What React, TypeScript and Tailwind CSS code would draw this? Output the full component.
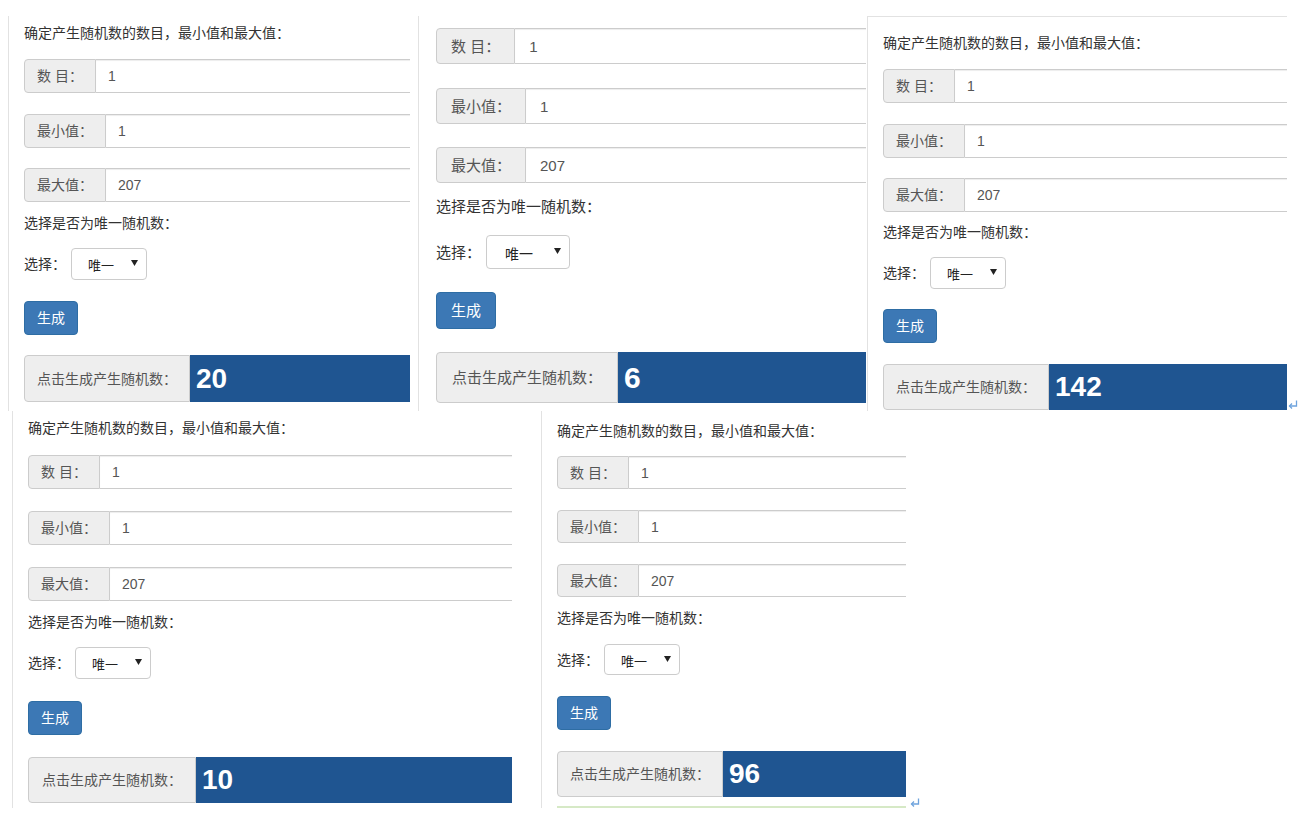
import React from "react"

type PanelCfg = {
  title: boolean
  big?: boolean
  pt: string
  titleGap: string
  groupH: string
  gap1: string
  gap2: string
  textMt: string
  selectMt: string
  selectH: string
  btnMt: string
  btnH: string
  resMt: string
  resH: string
  resPx: string
  clipW: string
  value: string
  footer?: boolean
}

const panels: Record<string, PanelCfg> = {
  one: {
    title: true, pt: "pt-[24px]", titleGap: "mt-[17px]", groupH: "h-[34px]", gap1: "mt-[21px]", gap2: "mt-[20px]",
    textMt: "mt-[12px]", selectMt: "mt-[16px]", selectH: "h-[32px]", btnMt: "mt-[21px]", btnH: "h-[34px]",
    resMt: "mt-[20px]", resH: "h-[47px]", resPx: "px-[12px]", clipW: "w-[386px]", value: "20",
  },
  two: {
    title: false, big: true, pt: "pt-[28px]", titleGap: "", groupH: "h-[36px]", gap1: "mt-[24px]", gap2: "mt-[23px]",
    textMt: "mt-[14px]", selectMt: "mt-[18px]", selectH: "h-[34px]", btnMt: "mt-[23px]", btnH: "h-[37px]",
    resMt: "mt-[23px]", resH: "h-[51px]", resPx: "px-[15px]", clipW: "w-[430px]", value: "6",
  },
  three: {
    title: true, pt: "pt-[17px]", titleGap: "mt-[17px]", groupH: "h-[34px]", gap1: "mt-[21px]", gap2: "mt-[20px]",
    textMt: "mt-[11px]", selectMt: "mt-[16px]", selectH: "h-[32px]", btnMt: "mt-[20px]", btnH: "h-[34px]",
    resMt: "mt-[21px]", resH: "h-[46px]", resPx: "px-[12px]", clipW: "w-[404px]", value: "142",
  },
  four: {
    title: true, pt: "pt-[8px]", titleGap: "mt-[18px]", groupH: "h-[34px]", gap1: "mt-[22px]", gap2: "mt-[22px]",
    textMt: "mt-[12px]", selectMt: "mt-[16px]", selectH: "h-[32px]", btnMt: "mt-[22px]", btnH: "h-[34px]",
    resMt: "mt-[22px]", resH: "h-[46px]", resPx: "px-[13px]", clipW: "w-[484px]", value: "10",
  },
  five: {
    title: true, pt: "pt-[11px]", titleGap: "mt-[16px]", groupH: "h-[33px]", gap1: "mt-[21px]", gap2: "mt-[21px]",
    textMt: "mt-[12px]", selectMt: "mt-[17px]", selectH: "h-[31px]", btnMt: "mt-[21px]", btnH: "h-[34px]",
    resMt: "mt-[21px]", resH: "h-[46px]", resPx: "px-[12px]", clipW: "w-[349px]", value: "96", footer: true,
  },
}

const Field = ({ label, value, big, className }: { label: string; value: string; big?: boolean; className: string }) => (
  <div className={`flex ${className}`}>
    <span
      className={`flex flex-none items-center rounded-l-[4px] border border-[#ccc] bg-[#eee] text-[#555] ${
        big ? "px-[14px]" : "px-[12px]"
      }`}
    >
      {label}
    </span>
    <span
      className={`flex flex-1 items-center border border-l-0 border-[#ccc] bg-white text-[#555] shadow-[inset_0_1px_1px_rgba(0,0,0,0.075)] ${
        big ? "pl-[14px]" : "pl-[12px]"
      }`}
    >
      {value}
    </span>
  </div>
)

const ReturnMark = ({ className }: { className: string }) => (
  <svg className={className} width="10" height="9" viewBox="0 0 10 9" fill="none" stroke="#6ea3dd" strokeWidth="1.3">
    <path d="M8.5 0.5 V6 H1.5" />
    <path d="M4 3.5 L1.5 6 L4 8.5" />
  </svg>
)

const Panel = ({ cfg }: { cfg: PanelCfg }) => {
  const big = cfg.big
  return (
    <div className={`${cfg.pt} ${cfg.clipW} overflow-hidden ${big ? "text-[15px]" : "text-[14px]"}`}>
      <div className="w-[900px]">
        {cfg.title && (
          <p className="h-[18px] leading-[18px] text-[#333]">确定产生随机数的数目，最小值和最大值：</p>
        )}
        <Field big={big} label="数 目：" value="1" className={`${cfg.groupH} ${cfg.titleGap}`} />
        <Field big={big} label="最小值：" value="1" className={`${cfg.groupH} ${cfg.gap1}`} />
        <Field big={big} label="最大值：" value="207" className={`${cfg.groupH} ${cfg.gap2}`} />
        <p className={`${cfg.textMt} ${big ? "h-[20px] leading-[20px]" : "h-[18px] leading-[18px]"} text-[#333]`}>
          选择是否为唯一随机数：
        </p>
        <div className={`flex items-center ${cfg.selectMt}`}>
          <span className="text-[#333]">选择：</span>
          <div
            className={`ml-[5px] flex items-center justify-between rounded-[4px] border border-[#ccc] bg-white pr-[8px] ${
              cfg.selectH
            } ${big ? "w-[84px] pl-[18px] text-[14px]" : "w-[76px] pl-[16px] text-[13px]"}`}
          >
            <span className="mt-[3px] text-[#222]">唯一</span>
            <svg width="7" height="6" viewBox="0 0 7 6" className="mb-[2px]">
              <polygon points="0,0 7,0 3.5,6" fill="#222" />
            </svg>
          </div>
        </div>
        <div className={cfg.btnMt}>
          <button
            className={`rounded-[4px] border border-[#2e6da4] bg-[#3c78b5] text-white ${cfg.btnH} ${
              big ? "px-[14px]" : "px-[12px]"
            }`}
          >
            生成
          </button>
        </div>
        <div className={`flex ${cfg.resMt} ${cfg.resH}`}>
          <span
            className={`flex flex-none items-center rounded-l-[4px] border border-[#ccc] bg-[#eee] text-[#555] ${cfg.resPx}`}
          >
            点击生成产生随机数：
          </span>
          <span
            className={`flex flex-1 items-center bg-[#1f5591] pl-[6px] font-bold text-white ${
              big ? "text-[30px]" : "text-[28px]"
            }`}
          >
            {cfg.value}
          </span>
        </div>
      </div>
      {cfg.footer && <div className="mt-[9px] h-[2px] bg-[#d6e9c6]" />}
    </div>
  )
}

export default function App() {
  return (
    <div className="h-[824px] w-[1314px] overflow-hidden bg-white font-['Liberation_Sans','Noto_Sans_CJK_SC',sans-serif] leading-none">
      <div className="flex h-[411px]">
        <div className="ml-[8px] mt-[16px] w-[411px] flex-none border-x border-[#e2e2e2]">
          <div className="-mt-[16px] pl-[15px]">
            <Panel cfg={panels.one} />
          </div>
        </div>
        <div className="w-[448px] flex-none pl-[17px]">
          <Panel cfg={panels.two} />
        </div>
        <div className="mt-[16px] w-[420px] flex-none border-l border-t border-[#e2e2e2] pl-[15px]">
          <Panel cfg={panels.three} />
        </div>
        <ReturnMark className="mb-[2px] ml-[1px] self-end" />
      </div>
      <div className="flex h-[397px]">
        <div className="ml-[12px] w-[500px] flex-none border-l border-[#e2e2e2] pl-[15px]">
          <Panel cfg={panels.four} />
        </div>
        <div className="ml-[29px] w-[366px] flex-none border-l border-[#e2e2e2] pl-[15px]">
          <Panel cfg={panels.five} />
        </div>
        <ReturnMark className="mb-[1px] ml-[3px] self-end" />
      </div>
    </div>
  )
}
